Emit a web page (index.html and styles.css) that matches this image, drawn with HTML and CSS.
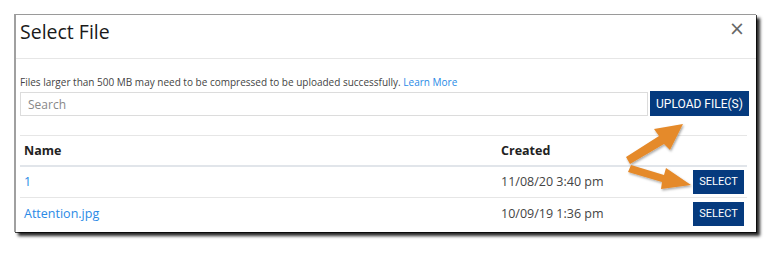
FILE: index.html
```html
<!DOCTYPE html>
<html lang="en">
<head>
<meta charset="utf-8">
<title>Select File</title>
<link rel="stylesheet" href="styles.css">
</head>
<body>
<div class="stage">
  <div class="modal">
    <div class="modal-header">
      <h1 class="modal-title">Select File</h1>
      <span class="close">&times;</span>
    </div>
    <div class="modal-body">
      <p class="notice">Files larger than 500 MB may need to be compressed to be uploaded successfully. <a class="link" href="#">Learn More</a></p>
      <div class="search-row">
        <input class="search" type="text" placeholder="Search">
        <button class="btn btn-upload">UPLOAD FILE(S)</button>
      </div>
      <table class="files">
        <thead>
          <tr><th class="col-name">Name</th><th class="col-created">Created</th><th class="col-action"></th></tr>
        </thead>
        <tbody>
          <tr><td><a class="link" href="#">1</a></td><td class="date">11/08/20 3:40 pm</td><td class="action"><button class="btn btn-select">SELECT</button></td></tr>
          <tr><td><a class="link" href="#">Attention.jpg</a></td><td class="date">10/09/19 1:36 pm</td><td class="action"><button class="btn btn-select">SELECT</button></td></tr>
        </tbody>
      </table>
    </div>
    <svg class="arrows" width="110" height="80" viewBox="0 0 110 80" aria-hidden="true">
      <defs>
        <filter id="sh" x="-20%" y="-20%" width="140%" height="140%">
          <feDropShadow dx="1" dy="1.5" stdDeviation="1" flood-color="#000" flood-opacity="0.35"/>
        </filter>
      </defs>
      <g fill="#e58a2b" filter="url(#sh)">
        <polygon points="12,42 45,21 40,14 69,9 56,35 50,29 16,49"/>
        <polygon points="17,50 50,60 52,53 77,70 47,74 48,67 14,57"/>
      </g>
    </svg>
  </div>
</div>
</body>
</html>
```

FILE: styles.css
```css
* { box-sizing: border-box; }
html, body { margin: 0; padding: 0; background: #fff; }
body {
  font-family: "Open Sans", "Noto Sans", sans-serif;
  color: #333;
  width: 783px;
  height: 259px;
  overflow: hidden;
}
.stage { padding: 14px 0 0 14px; }
.modal {
  position: relative;
  width: 742px;
  height: 218px;
  background: #fff;
  border-top: 1px solid #9a9a9a;
  border-left: 2px solid #a0a0a0;
  box-shadow: 4px 4px 3px rgba(0,0,0,0.85), 1px 1px 0 #444;
}
.modal-header {
  display: flex;
  justify-content: space-between;
  align-items: flex-start;
  height: 44px;
  border-bottom: 1px solid #e6e6e6;
  padding: 0 11px 0 4px;
}
.modal-title {
  margin: 0;
  font-weight: 400;
  font-size: 19.5px;
  line-height: 33px;
  color: #1a1a1a;
}
.close {
  font-family: "DejaVu Sans", sans-serif;
  font-size: 19px;
  line-height: 24px;
  margin-top: 1px;
  color: #666;
}
.modal-body { padding: 0 7px 0 4px; }
.notice {
  margin: 15px 0 0 0;
  font-size: 10px;
  line-height: 16px;
  color: #444;
}
.link { color: #2a8ae6; text-decoration: none; }
.search-row {
  display: flex;
  align-items: flex-start;
  margin-top: 1px;
}
.search {
  flex: 1;
  height: 24px;
  margin-top: 1px;
  border: 1px solid #dcdcdc;
  padding: 0 7px;
  font-family: inherit;
  font-size: 12px;
  color: #333;
  outline: none;
}
.search::placeholder { color: #888; }
.btn {
  border: 0;
  background: #053a7e;
  color: #fff;
  font-family: "Roboto", "Liberation Sans", sans-serif;
  cursor: pointer;
}
.btn-upload {
  width: 99px;
  height: 25px;
  margin-left: 2px;
  font-size: 12px;
  padding: 0;
}
.files {
  width: 727px;
  margin-top: 19px;
  border-collapse: collapse;
  font-size: 12.5px;
}
.files th {
  text-align: left;
  font-weight: 700;
  color: #222;
  height: 30px;
  padding: 0 4px;
  border-top: 1px solid #e6e6e6;
  border-bottom: 2px solid #e1e5ea;
}
.files td {
  height: 32px;
  padding: 0 4px;
  border-bottom: 1px solid #e6e6e6;
}
.files tbody tr:last-child td { border-bottom: 0; }
.col-name { width: 477px; }
.col-action { width: 60px; }
.date { color: #444; }
.action { text-align: right; padding-right: 3px !important; }
.btn-select {
  width: 51px;
  height: 24px;
  font-size: 11px;
  padding: 0;
  vertical-align: middle;
}
.arrows {
  position: absolute;
  left: 598px;
  top: 100px;
}
```
